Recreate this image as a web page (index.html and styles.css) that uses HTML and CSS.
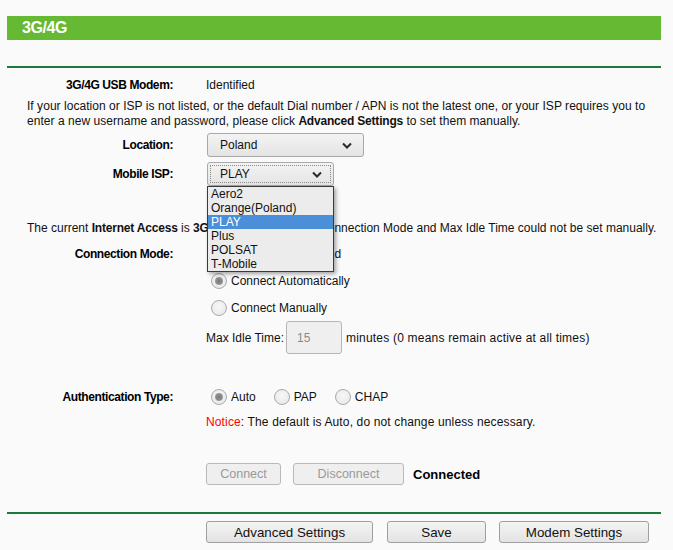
FILE: index.html
```html
<!DOCTYPE html>
<html>
<head>
<meta charset="utf-8">
<title>3G/4G</title>
<link rel="stylesheet" href="styles.css">
</head>
<body>
<div class="page">
  <div class="title-bar"><span class="title">3G/4G</span></div>
  <div class="rule rule-top"></div>

  <div class="row row-modem">
    <div class="label">3G/4G USB Modem:</div>
    <div class="value">Identified</div>
  </div>

  <p class="note">If your location or ISP is not listed, or the default Dial number / APN is not the latest one, or your ISP requires you to<br>enter a new username and password, please click <b>Advanced Settings</b> to set them manually.</p>

  <div class="row row-select row-location">
    <div class="label">Location:</div>
    <div class="value">
      <div class="select sel-loc">
        <span class="sel-text">Poland</span>
        <svg class="chev" width="10" height="7" viewBox="0 0 10 7"><polyline points="1,1.5 5,5.5 9,1.5" fill="none" stroke="#2a2a2a" stroke-width="2"/></svg>
      </div>
    </div>
  </div>

  <div class="row row-select row-isp">
    <div class="label">Mobile ISP:</div>
    <div class="value">
      <div class="select sel-isp">
        <span class="focus-ring"></span>
        <span class="sel-text">PLAY</span>
        <svg class="chev" width="10" height="7" viewBox="0 0 10 7"><polyline points="1,1.5 5,5.5 9,1.5" fill="none" stroke="#2a2a2a" stroke-width="2"/></svg>
        <ul class="dropdown">
          <li>Aero2</li>
          <li>Orange(Poland)</li>
          <li class="active">PLAY</li>
          <li>Plus</li>
          <li>POLSAT</li>
          <li>T-Mobile</li>
        </ul>
      </div>
    </div>
  </div>

  <p class="current">The current <b>Internet Access</b> is <b>3G/4G Only</b>, hence the Connection Mode and Max Idle Time could not be set manually.</p>

  <div class="row row-radio">
    <div class="label">Connection Mode:</div>
    <div class="value"><label class="radio"><input type="radio" name="mode" disabled><span>Connect on Demand</span></label></div>
  </div>
  <div class="row row-radio">
    <div class="label"></div>
    <div class="value"><label class="radio"><input type="radio" name="mode" checked disabled><span>Connect Automatically</span></label></div>
  </div>
  <div class="row row-radio">
    <div class="label"></div>
    <div class="value"><label class="radio"><input type="radio" name="mode" disabled><span>Connect Manually</span></label></div>
  </div>
  <div class="row row-idle">
    <div class="label"></div>
    <div class="value"><span>Max Idle Time:</span><input class="idle-input" type="text" value="15" disabled><span class="idle-hint">minutes (0 means remain active at all times)</span></div>
  </div>

  <div class="row row-auth">
    <div class="label">Authentication Type:</div>
    <div class="value">
      <label class="radio auth"><input type="radio" name="auth" checked disabled><span>Auto</span></label>
      <label class="radio auth"><input type="radio" name="auth" disabled><span>PAP</span></label>
      <label class="radio auth"><input type="radio" name="auth" disabled><span>CHAP</span></label>
    </div>
  </div>
  <div class="row row-notice">
    <div class="label"></div>
    <div class="value"><span class="red">Notice</span>: The default is Auto, do not change unless necessary.</div>
  </div>

  <div class="row row-connect">
    <div class="label"></div>
    <div class="value">
      <button class="btn btn-disabled btn-connect" disabled>Connect</button>
      <button class="btn btn-disabled btn-disconnect" disabled>Disconnect</button>
      <span class="status">Connected</span>
    </div>
  </div>

  <div class="rule rule-bottom"></div>

  <div class="row row-actions">
    <div class="label"></div>
    <div class="value">
      <button class="btn btn-main btn-adv">Advanced Settings</button>
      <button class="btn btn-main btn-save">Save</button>
      <button class="btn btn-main btn-modem">Modem Settings</button>
    </div>
  </div>
</div>
</body>
</html>
```

FILE: styles.css
```css
html, body {
  margin: 0;
  padding: 0;
  background: #fafafa;
}
body {
  font-family: "Liberation Sans", Arial, sans-serif;
  font-size: 12px;
  color: #111;
}
.page {
  width: 654px;
  margin-left: 7px;
  padding-top: 16px;
}
.title-bar {
  height: 24px;
  background: #66b933;
  display: flex;
  align-items: center;
}
.title {
  padding-left: 15px;
  color: #fff;
  font-size: 16px;
  font-weight: bold;
  letter-spacing: -0.4px;
}
.rule {
  height: 2px;
  background: #1c7a3a;
}
.rule-top { margin-top: 26px; }
.rule-bottom { margin-top: 27px; }

.row {
  display: grid;
  grid-template-columns: 166px 1fr;
  column-gap: 33px;
  align-items: center;
}
.label {
  text-align: right;
  font-weight: bold;
  color: #000;
  letter-spacing: -0.4px;
}
.value {
  display: flex;
  align-items: center;
  white-space: nowrap;
}
.row-modem { margin-top: 6px; height: 22px; }
.note {
  margin: 3px 0 0 0;
  padding-left: 20px;
  line-height: 15px;
  white-space: nowrap;
  letter-spacing: 0.04px;
}
.note b { letter-spacing: -0.2px; }
.row-select { height: 24px; }
.row-location { margin-top: 4px; }
.row-isp { margin-top: 5px; }

.select {
  position: relative;
  height: 24px;
  box-sizing: border-box;
  border: 1px solid #a8a8a8;
  border-radius: 3px;
  background: linear-gradient(#f3f3f3, #e4e4e4);
  display: flex;
  align-items: center;
  padding-left: 12px;
  margin-left: 1px;
  color: #111;
}
.sel-loc { width: 157px; }
.sel-isp { width: 127px; }
.sel-text { flex: 1; }
.chev { margin-right: 11px; }
.focus-ring {
  position: absolute;
  left: 2px; top: 2px; right: 2px; bottom: 2px;
  border: 1px dotted #8a8a8a;
}
.dropdown {
  position: absolute;
  left: -1px;
  top: 23px;
  width: 127px;
  box-sizing: border-box;
  margin: 0;
  padding: 0;
  list-style: none;
  background: #ececec;
  border: 1px solid #3a3a3a;
  box-shadow: 2px 2px 4px rgba(0,0,0,0.35);
  z-index: 10;
}
.dropdown li {
  height: 14px;
  line-height: 14px;
  padding-left: 3px;
  color: #111;
}
.dropdown li.active {
  background: #4a8fd8;
  color: #fff;
}

.current {
  margin: 34px 0 0 0;
  padding-left: 20px;
  line-height: 16px;
  white-space: nowrap;
}
.current b { letter-spacing: -0.2px; }

.row-radio { height: 27px; }
.current + .row-radio { margin-top: 4px; }

.radio {
  display: inline-flex;
  align-items: center;
}
.radio input {
  -webkit-appearance: none;
  appearance: none;
  width: 16px;
  height: 16px;
  margin: 0 4px 0 5px;
  border: 1px solid #a9a9a9;
  border-radius: 50%;
  background: radial-gradient(circle at 50% 40%, #f7f7f7 0%, #e6e6e6 100%);
  box-sizing: border-box;
  position: relative;
}
.radio input:checked::after {
  content: "";
  position: absolute;
  left: 3px; top: 3px;
  width: 8px; height: 8px;
  border-radius: 50%;
  background: radial-gradient(circle, #7a7a7a 0%, #8e8e8e 55%, #c8c8c8 100%);
}
.radio span { color: #111; }
.auth { margin-right: 13px; }
.auth:last-child { margin-right: 0; }

.row-idle { height: 33px; }
.idle-input {
  width: 56px;
  height: 33px;
  box-sizing: border-box;
  margin: 0 4px 0 2px;
  border: 1px solid #b5b5b5;
  border-radius: 3px;
  background: #efefef;
  color: #8a8a8a;
  font-family: "Liberation Sans", Arial, sans-serif;
  font-size: 12px;
  padding: 0 0 0 10px;
}
.idle-hint { letter-spacing: 0.2px; }

.row-auth { margin-top: 30px; height: 26px; }
.row-notice { margin-top: 4px; height: 16px; }
.row-notice .value { letter-spacing: 0.14px; }
.red { color: #ff0000; }

.row-connect { margin-top: 33px; height: 22px; }
.btn {
  font-family: "Liberation Sans", Arial, sans-serif;
  height: 22px;
  box-sizing: border-box;
  border-radius: 3px;
  padding: 0;
  margin: 0;
}
.btn-disabled {
  border: 1px solid #b9b9b9;
  background: #efefef;
  color: #9a9a9a;
  font-size: 12.5px;
}
.btn-connect { width: 75px; }
.btn-disconnect { width: 111px; margin-left: 12px; }
.status {
  margin-left: 9px;
  font-weight: bold;
  font-size: 13px;
  color: #000;
}

.row-actions { margin-top: 7px; height: 22px; }
.btn-main {
  border: 1px solid #a0a0a0;
  background: linear-gradient(#f4f4f4, #e3e3e3);
  color: #111;
  font-size: 13.33px;
}
.btn-adv { width: 167px; }
.btn-save { width: 99px; margin-left: 14px; }
.btn-modem { width: 150px; margin-left: 13px; }
```
